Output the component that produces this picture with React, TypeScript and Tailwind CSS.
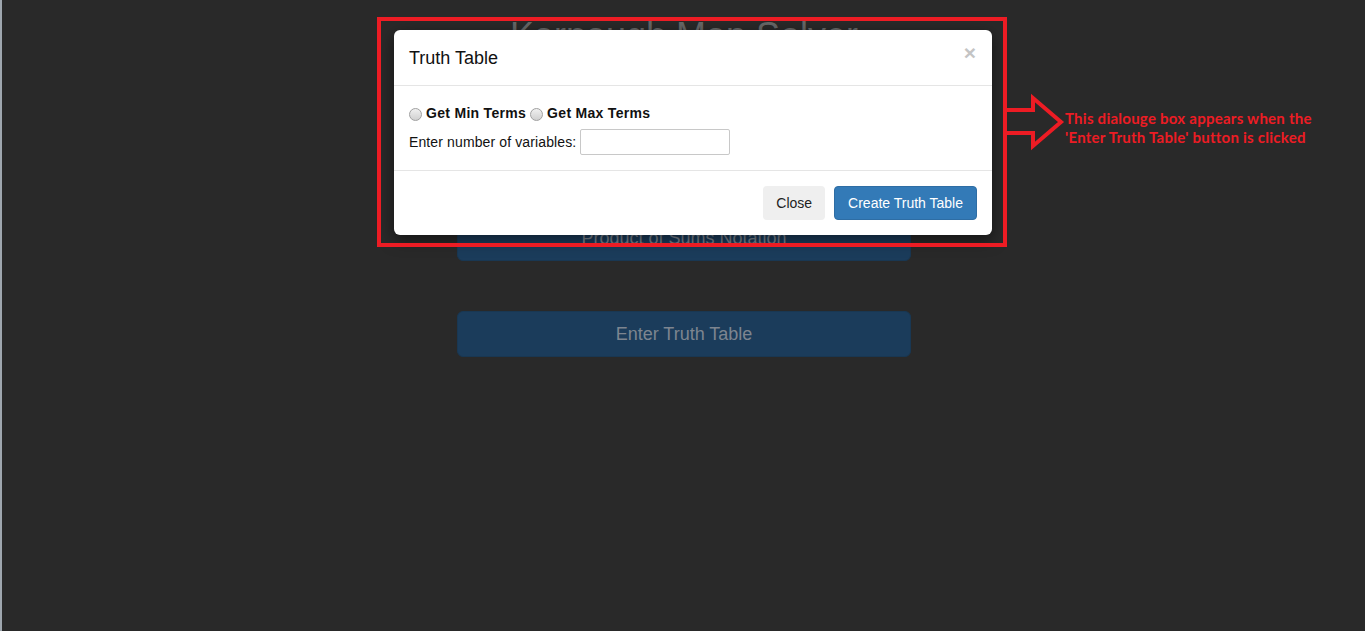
import React from "react";

function PageButton({ label }: { label: string }) {
  return (
    <button
      type="button"
      className="w-full h-[46px] rounded-[6px] bg-[#1b3c5b] border border-[#193752] text-[18px] text-[#7d8590]"
    >
      {label}
    </button>
  );
}

function Radio() {
  return (
    <span className="inline-block w-[13px] h-[13px] rounded-full border border-[#a0a0a0] bg-gradient-to-b from-[#f0f0f0] to-[#d0d0d0] mr-[4px] translate-y-[1px]" />
  );
}

export default function App() {
  return (
    <div
      className="relative h-[631px] overflow-hidden bg-[#292929] border-l-2 border-[#9ea6ae]"
      style={{ fontFamily: '"Liberation Sans", Arial, sans-serif' }}
    >
      {/* page behind the backdrop */}
      <div className="w-[454px] ml-[455px] pt-[16px]">
        <h1 className="text-center text-[36px] leading-[40px] text-[#666666]">
          Karnaugh Map Solver
        </h1>
        <div className="mt-[63px] flex flex-col gap-[50px]">
          <PageButton label="Sum of Products Notation" />
          <PageButton label="Product of Sums Notation" />
          <PageButton label="Enter Truth Table" />
        </div>
      </div>

      {/* modal */}
      <div className="absolute left-[392px] top-[30px] w-[598px] rounded-[6px] bg-white shadow-[0_5px_15px_rgba(0,0,0,0.5)] text-[14px] text-[#111]">
        <div className="flex items-center justify-between px-[15px] h-[56px] border-b border-[#e5e5e5]">
          <h4 className="text-[18px] leading-[26px] text-[#111]">Truth Table</h4>
          <span className="text-[21px] font-bold leading-none text-[#c4c4c4] mr-[1px] mt-[-10px]">
            ×
          </span>
        </div>
        <div className="px-[15px] pt-[17px] pb-[15px]">
          <div className="flex items-center h-[20px] font-bold leading-[20px] tracking-[0.3px]">
            <Radio />
            <span className="mr-[4px]">Get Min Terms</span>
            <Radio />
            <span>Get Max Terms</span>
          </div>
          <div className="mt-[6px] flex items-center h-[26px]">
            <span className="mr-[4px] tracking-[0.12px]">Enter number of variables:</span>
            <input
              type="text"
              className="w-[150px] h-[26px] border border-[#c8c8c8] rounded-[2px] outline-none"
            />
          </div>
        </div>
        <div className="flex justify-end gap-[9px] px-[15px] py-[15px] border-t border-[#e5e5e5]">
          <button
            type="button"
            className="h-[34px] px-[13px] rounded-[4px] bg-[#efefef] text-[14px] text-[#222]"
          >
            Close
          </button>
          <button
            type="button"
            className="h-[34px] px-[13px] rounded-[4px] bg-[#337ab7] border border-[#2e6da4] text-[14px] text-white"
          >
            Create Truth Table
          </button>
        </div>
      </div>

      {/* annotation */}
      <div className="absolute left-[375px] top-[17px] w-[630px] h-[230px] border-4 border-[#ed1c24]" />
      <svg
        className="absolute left-[1000px] top-[92px]"
        width="66"
        height="60"
        viewBox="0 0 66 60"
      >
        <polyline
          points="3,18 31,18 31,6 59,30 31,54 31,41 3,41"
          fill="none"
          stroke="#ed1c24"
          strokeWidth="4"
          strokeLinejoin="miter"
        />
      </svg>
      <div
        className="absolute left-[1063px] top-[109px] text-[15px] leading-[19px] font-bold tracking-[0.25px] text-[#ed1c24]"
        style={{ fontFamily: "Lato, sans-serif" }}
      >
        <div>This dialouge box appears when the</div>
        <div>'Enter Truth Table' button is clicked</div>
      </div>
    </div>
  );
}
